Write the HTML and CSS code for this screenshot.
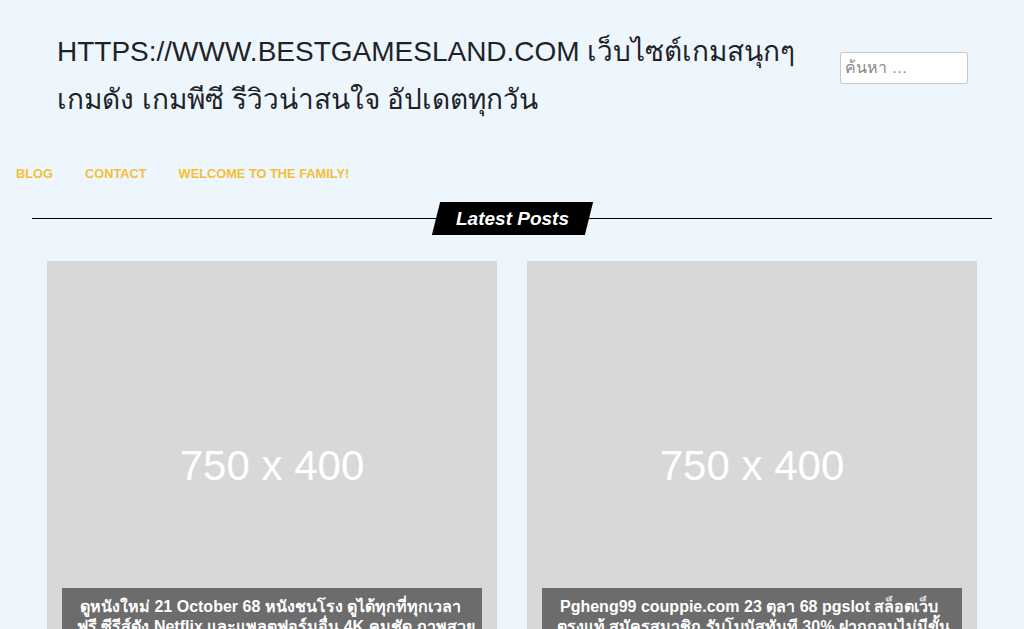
FILE: index.html
```html
<!DOCTYPE html>
<html lang="th">
<head>
<meta charset="utf-8">
<title>HTTPS://WWW.BESTGAMESLAND.COM</title>
<link rel="stylesheet" href="styles.css">
</head>
<body>
<header class="site-header">
  <div class="brand">
    <p class="site-title">HTTPS://WWW.BESTGAMESLAND.COM เว็บไซต์เกมสนุกๆ เกมดัง เกมพีซี รีวิวน่าสนใจ อัปเดตทุกวัน</p>
  </div>
  <form class="search" role="search">
    <input class="search-field" type="search" placeholder="ค้นหา …">
  </form>
</header>

<nav class="main-nav">
  <a href="#">BLOG</a>
  <a href="#">CONTACT</a>
  <a href="#">WELCOME TO THE FAMILY!</a>
</nav>

<section class="latest">
  <div class="section-title">
    <span class="badge"><span class="badge-text">Latest Posts</span></span>
  </div>
  <div class="post-grid">
    <article class="card">
      <div class="thumb">750 x 400</div>
      <div class="caption">ดูหนังใหม่ 21 October 68 หนังชนโรง ดูได้ทุกที่ทุกเวลา ฟรี ซีรีส์ดัง Netflix และแพลตฟอร์มอื่น 4K คมชัด ภาพสวยเสียงดี ครบ</div>
    </article>
    <article class="card">
      <div class="thumb">750 x 400</div>
      <div class="caption">Pgheng99 couppie.com 23 ตุลา 68 pgslot สล็อตเว็บ ตรงแท้ สมัครสมาชิก รับโบนัสทันที 30% ฝากถอนไม่มีขั้นต่ำรวดเร็วทันใจตลอดวัน</div>
    </article>
  </div>
</section>
</body>
</html>
```

FILE: styles.css
```css
* {
  box-sizing: border-box;
}

body {
  margin: 0;
  background: #eef6fd;
  font-family: "Liberation Sans", Arial, sans-serif;
  color: #222;
}

.site-header {
  display: flex;
  justify-content: space-between;
  align-items: flex-start;
  padding: 28px 56px 0 57px;
}

.site-title {
  margin: 0;
  max-width: 760px;
  font-size: 28px;
  line-height: 48px;
  font-weight: normal;
  color: #1f2328;
}

.search {
  margin: 24px 0 0;
}

.search-field {
  display: block;
  width: 128px;
  height: 32px;
  padding: 0 4px;
  border: 1px solid #c8c8c8;
  border-radius: 3px;
  background: #fff;
  font-family: "Liberation Sans", Arial, sans-serif;
  font-size: 16px;
  color: #333;
}

.search-field::placeholder {
  color: #8a8a8a;
}

.main-nav {
  display: flex;
  gap: 32px;
  padding: 40px 16px 0;
}

.main-nav a {
  font-size: 12.8px;
  line-height: 20px;
  font-weight: bold;
  color: #f4bf36;
  text-decoration: none;
}

.section-title {
  position: relative;
  display: flex;
  justify-content: center;
  margin: 18px 32px 0;
  height: 33px;
}

.section-title::before {
  content: "";
  position: absolute;
  left: 0;
  right: 0;
  top: 16px;
  height: 1px;
  background: #000;
}

.badge {
  position: relative;
  display: block;
  height: 33px;
  padding: 0 20px;
  background: #000;
  transform: skewX(-14deg);
}

.badge-text {
  display: block;
  transform: skewX(14deg);
  font-size: 19px;
  line-height: 33px;
  font-weight: bold;
  font-style: italic;
  color: #fff;
}

.post-grid {
  display: grid;
  grid-template-columns: 1fr 1fr;
  gap: 30px;
  margin: 26px 47px 0;
}

.card {
  position: relative;
  height: 450px;
  background: #d8d8d8;
}

.thumb {
  display: flex;
  align-items: center;
  justify-content: center;
  height: 410px;
  font-size: 42px;
  color: #fff;
}

.caption {
  position: absolute;
  top: 327px;
  left: 15px;
  right: 15px;
  padding: 9px 4px 9px 15px;
  background: rgba(0, 0, 0, 0.5);
  color: #fff;
  font-size: 16px;
  line-height: 20px;
  font-weight: bold;
  text-indent: 3px;
}
```
